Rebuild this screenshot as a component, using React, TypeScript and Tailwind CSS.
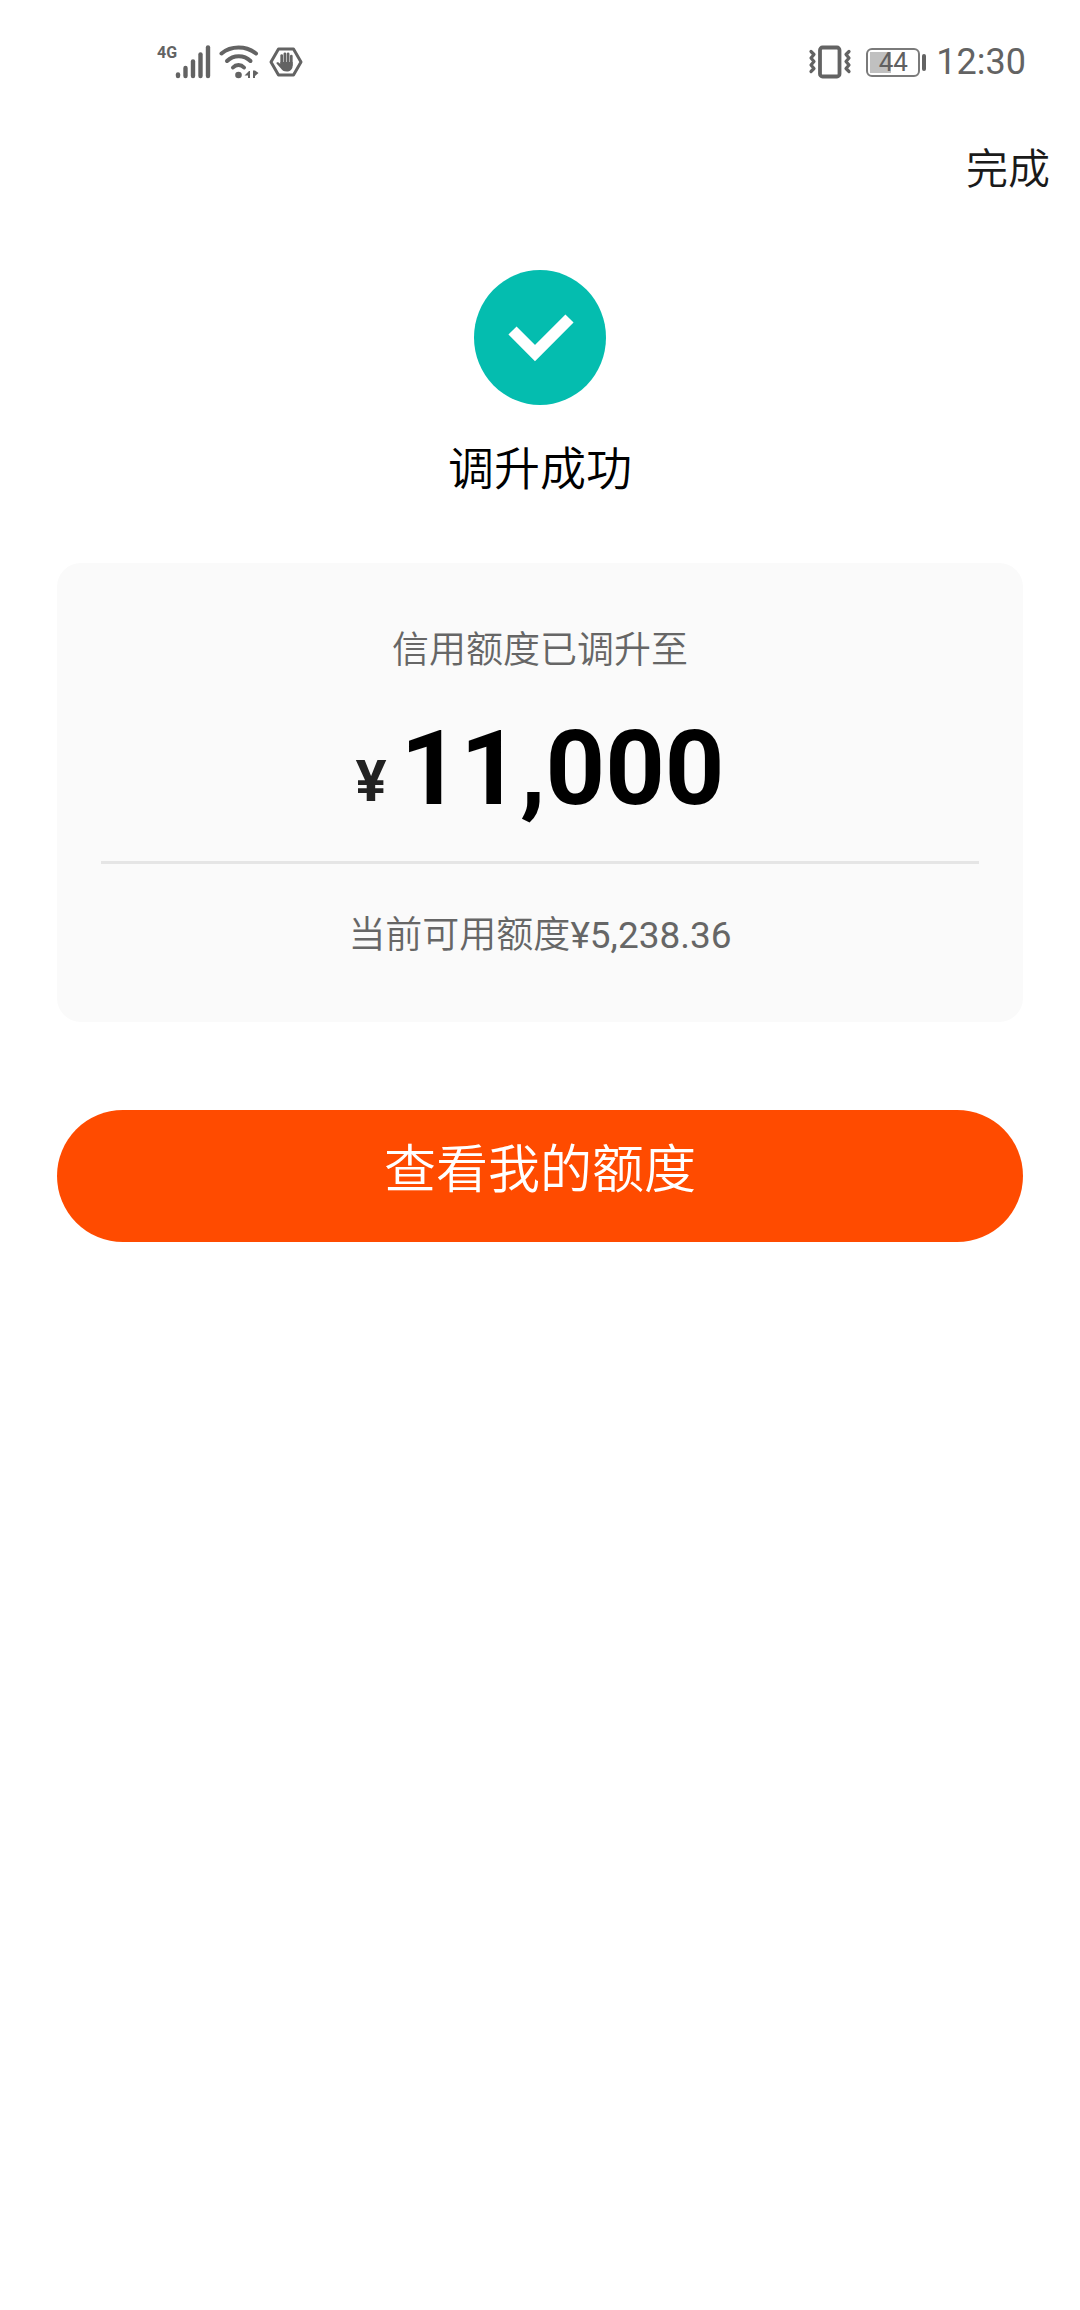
import React from "react";

const SignalIcon = () => (
  <svg width="36" height="34" viewBox="0 0 36 34" className="text-[#636363]" aria-hidden="true">
    <g stroke="currentColor" strokeWidth="4.400" strokeLinecap="round">
      <path d="M3 29.500V31" />
      <path d="M10.500 23V31" />
      <path d="M18 16.500V31" />
      <path d="M25.500 9.500V31" />
      <path d="M33 2.500V31" />
    </g>
  </svg>
);

const WifiIcon = () => (
  <svg width="40" height="34" viewBox="0 0 40 34" className="text-[#636363]" aria-hidden="true">
    <g fill="none" stroke="currentColor" strokeWidth="4" strokeLinecap="round">
      <path d="M2.500 8.500C12 0.500 27 0.500 37 8.500" />
      <path d="M8 16C14.500 9.500 25 9.500 31.500 16" />
      <path d="M14 22.500C17 19.300 22 19.300 25 22.500" />
    </g>
    <circle cx="19.500" cy="30" r="3.300" fill="currentColor" />
    <path d="M25.500 30.500L30 26H31V33H29V30.500Z" fill="currentColor" />
    <path d="M34 25.500V33H36V31L39.500 28L36 25.500Z" fill="currentColor" />
  </svg>
);

const HandIcon = () => (
  <svg width="34" height="30" viewBox="0 0 34 30" className="text-[#636363]" aria-hidden="true">
    <path
      d="M9.500 2H24.500L32 15L24.500 28H9.500L2 15Z"
      fill="none"
      stroke="currentColor"
      strokeWidth="3"
      strokeLinejoin="round"
    />
    <g stroke="currentColor" strokeWidth="2.700" strokeLinecap="round">
      <path d="M12.700 8.500V17" />
      <path d="M15.900 6.800V16" />
      <path d="M19.100 6.800V16" />
      <path d="M22.300 9V18" />
    </g>
    <path
      d="M11.400 15H23.600V19C23.600 22.500 21 24.500 17.800 24.500C14.500 24.500 13.300 23.500 11.500 21L7.500 16.500C7.200 15.300 8.600 14.800 9.600 15.500L11.400 17Z"
      fill="currentColor"
    />
  </svg>
);

const VibrateIcon = () => (
  <svg width="44" height="34" viewBox="0 0 44 34" className="text-[#636363]" aria-hidden="true">
    <g fill="none" stroke="currentColor" strokeLinejoin="round" strokeLinecap="round">
      <rect x="12" y="2.500" width="19.500" height="29" rx="2.500" strokeWidth="3.800" />
      <path d="M3 6.500L6 9.500L3 13L6 16.500L3 20L6 23.500L3 26.500" strokeWidth="3.200" />
      <path d="M41 6.500L38 9.500L41 13L38 16.500L41 20L38 23.500L41 26.500" strokeWidth="3.200" />
    </g>
  </svg>
);

const Battery = ({ level }: { level: number }) => (
  <div className="flex items-center gap-0.5">
    <div className="relative flex h-[29px] w-[54px] items-center justify-center rounded-md border-2 border-[#7a7a7a]">
      <div className="absolute inset-0.5">
        <div className="h-full bg-[#c0c0c0]" style={{ width: `${level}%` }} />
      </div>
      <span className="relative text-[26px] leading-none text-[#606060]">{level}</span>
    </div>
    <div className="h-[17px] w-1 rounded-sm bg-[#636363]" />
  </div>
);

const SuccessIcon = () => (
  <svg width="132" height="135" viewBox="0 0 132 135" aria-hidden="true">
    <ellipse cx="66" cy="67.500" rx="66" ry="67.500" fill="#04BDAF" />
    <path d="M38.500 60.500L61 83L95.500 48.500" fill="none" stroke="#fff" strokeWidth="11.500" />
  </svg>
);

const App = () => {
  return (
    <div className="min-h-screen bg-white font-[Roboto,'Noto_Sans_CJK_SC',sans-serif] font-[350]">
      {/* Status bar */}
      <div className="flex h-31 items-center justify-between pr-[54px] pl-[157px] font-normal">
        <div className="flex items-center">
          <span className="self-start text-[16px] leading-4 font-bold text-[#636363]">4G</span>
          <div className="-ml-0.5">
            <SignalIcon />
          </div>
          <div className="ml-2">
            <WifiIcon />
          </div>
          <div className="ml-2.5">
            <HandIcon />
          </div>
        </div>
        <div className="flex items-center">
          <VibrateIcon />
          <div className="ml-3.5">
            <Battery level={44} />
          </div>
          <span className="ml-2.5 text-[36px] leading-none text-[#636363]">12:30</span>
        </div>
      </div>

      {/* Top navigation */}
      <header className="flex h-23 items-center justify-end px-[30px]">
        <button type="button" className="text-[42px] leading-[60px] text-[#1a1a1a]">
          完成
        </button>
      </header>

      <main className="px-[57px] pt-[54px]">
        <div className="flex flex-col items-center">
          <SuccessIcon />
          <h1 className="mt-8 text-[46px] leading-[64px] text-black">调升成功</h1>
        </div>

        {/* Limit card */}
        <section className="mt-[62px] rounded-3xl bg-[#fafafa] px-11 pt-[62px] pb-[60px] text-center">
          <p className="text-[37px] leading-[52px] text-[#666666]">信用额度已调升至</p>
          <p className="mt-8 flex items-end justify-center gap-3.5 font-bold">
            <span className="text-[58px] leading-[96px] text-[#222222]">¥</span>
            <span className="text-[104px] leading-[120px] text-black">11,000</span>
          </p>
          <hr className="mt-8 border-t-[3px] border-[#e5e5e5]" />
          <p className="mt-[46px] text-[37px] leading-[52px] text-[#666666]">
            当前可用额度<span className="font-normal">¥5,238.36</span>
          </p>
        </section>

        <button
          type="button"
          className="mt-[88px] flex h-33 w-full items-center justify-center rounded-full bg-[#ff4b00] pb-2.5 text-[52px] leading-none text-white"
        >
          查看我的额度
        </button>
      </main>
    </div>
  );
};

export default App;
